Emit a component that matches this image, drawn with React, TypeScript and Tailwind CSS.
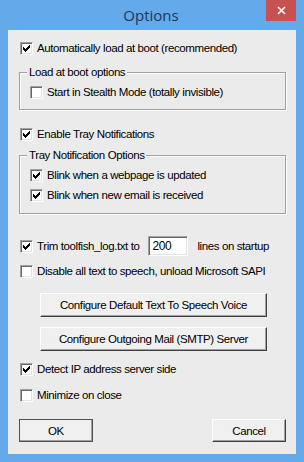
import React from "react";

const CheckMark = () => (
  <svg width="7" height="7" viewBox="0 0 7 7" shapeRendering="crispEdges" className="block">
    <rect x="0" y="2" width="1" height="3" fill="#000" />
    <rect x="1" y="3" width="1" height="3" fill="#000" />
    <rect x="2" y="4" width="1" height="3" fill="#000" />
    <rect x="3" y="3" width="1" height="3" fill="#000" />
    <rect x="4" y="2" width="1" height="3" fill="#000" />
    <rect x="5" y="1" width="1" height="3" fill="#000" />
    <rect x="6" y="0" width="1" height="3" fill="#000" />
  </svg>
);

const Check = ({ label, checked, className = "" }: { label: string; checked?: boolean; className?: string }) => (
  <label className={`flex h-[20px] items-center ${className}`}>
    <span className="flex h-[13px] w-[13px] shrink-0 items-center justify-center border border-t-[#a0a0a0] border-l-[#a0a0a0] border-b-white border-r-white bg-white shadow-[inset_1px_1px_0_#696969,inset_-1px_-1px_0_#e3e3e3]">
      {checked && <CheckMark />}
    </span>
    <span className="ml-[4px] whitespace-nowrap">{label}</span>
  </label>
);

const Button = ({ children, className = "" }: { children: React.ReactNode; className?: string }) => (
  <button className={`flex items-center justify-center border border-t-white border-l-white border-b-[#404040] border-r-[#404040] bg-[#f0f0f0] shadow-[inset_-1px_-1px_0_#a0a0a0] ${className}`}>
    {children}
  </button>
);

const Group = ({ title, children, className = "" }: { title: string; children: React.ReactNode; className?: string }) => (
  <fieldset className={`ml-[11px] mr-[10px] border border-[#a0a0a0] shadow-[1px_1px_0_#fff,inset_1px_1px_0_#fff] ${className}`}>
    <legend className="ml-[7px] bg-[#ebebeb] px-[2px] leading-[14px]">{title}</legend>
    {children}
  </fieldset>
);

export default function App() {
  return (
    <div className="flex h-[462px] w-[304px] flex-col bg-[#64aaea] font-['Liberation_Sans',Arial,sans-serif]">
      <div className="flex h-[30px] shrink-0 items-start">
        <div className="flex h-[30px] flex-1 items-center justify-center pl-[36px] font-['Open_Sans',sans-serif] text-[15px] text-[#1a3658]">
          Options
        </div>
        <div className="mr-[8px] flex h-[21px] w-[30px] items-center justify-center bg-[#c75050]">
          <svg width="9" height="9" viewBox="0 0 9 9">
            <path d="M1 1L8 8M8 1L1 8" stroke="#fff" strokeWidth="1.6" />
          </svg>
        </div>
      </div>

      <div className="mx-[8px] mb-[8px] flex flex-1 flex-col bg-[#ebebeb] text-[11.5px] leading-[14px] tracking-[-0.4px] text-black">
        <Check label="Automatically load at boot (recommended)" checked className="ml-[12px] mt-[8px]" />

        <Group title="Load at boot options" className="mt-[7px] pb-[7px]">
          <Check label="Start in Stealth Mode (totally invisible)" className="ml-[10px] mt-[3px]" />
        </Group>

        <Check label="Enable Tray Notifications" checked className="ml-[12px] mt-[14px]" />

        <Group title="Tray Notification Options" className="mt-[4px] pb-[8px]">
          <Check label="Blink when a webpage is updated" checked className="ml-[10px] mt-[3px]" />
          <Check label="Blink when new email is received" checked className="ml-[10px]" />
        </Group>

        <div className="ml-[12px] mt-[22px] flex h-[20px] items-center">
          <Check label="Trim toolfish_log.txt to" checked />
          <div className="ml-[9px] flex h-[20px] w-[40px] items-center border border-t-[#a0a0a0] border-l-[#a0a0a0] border-b-white border-r-white bg-white pl-[3px] text-[12px] shadow-[inset_1px_1px_0_#696969,inset_-1px_-1px_0_#e3e3e3]">
            200
          </div>
          <span className="ml-[9px]">lines on startup</span>
        </div>

        <Check label="Disable all text to speech, unload Microsoft SAPI" className="ml-[12px] mt-[5px]" />

        <Button className="ml-[32px] mt-[12px] h-[24px] w-[227px]">Configure Default Text To Speech Voice</Button>
        <Button className="ml-[32px] mt-[10px] h-[24px] w-[227px]">Configure Outgoing Mail (SMTP) Server</Button>

        <Check label="Detect IP address server side" checked className="ml-[12px] mt-[8px]" />
        <Check label="Minimize on close" className="ml-[12px] mt-[6px]" />

        <div className="ml-[11px] mr-[10px] mt-[14px] flex justify-between">
          <Button className="h-[23px] w-[74px] !border-[#505050]">OK</Button>
          <Button className="h-[23px] w-[74px]">Cancel</Button>
        </div>
      </div>
    </div>
  );
}
